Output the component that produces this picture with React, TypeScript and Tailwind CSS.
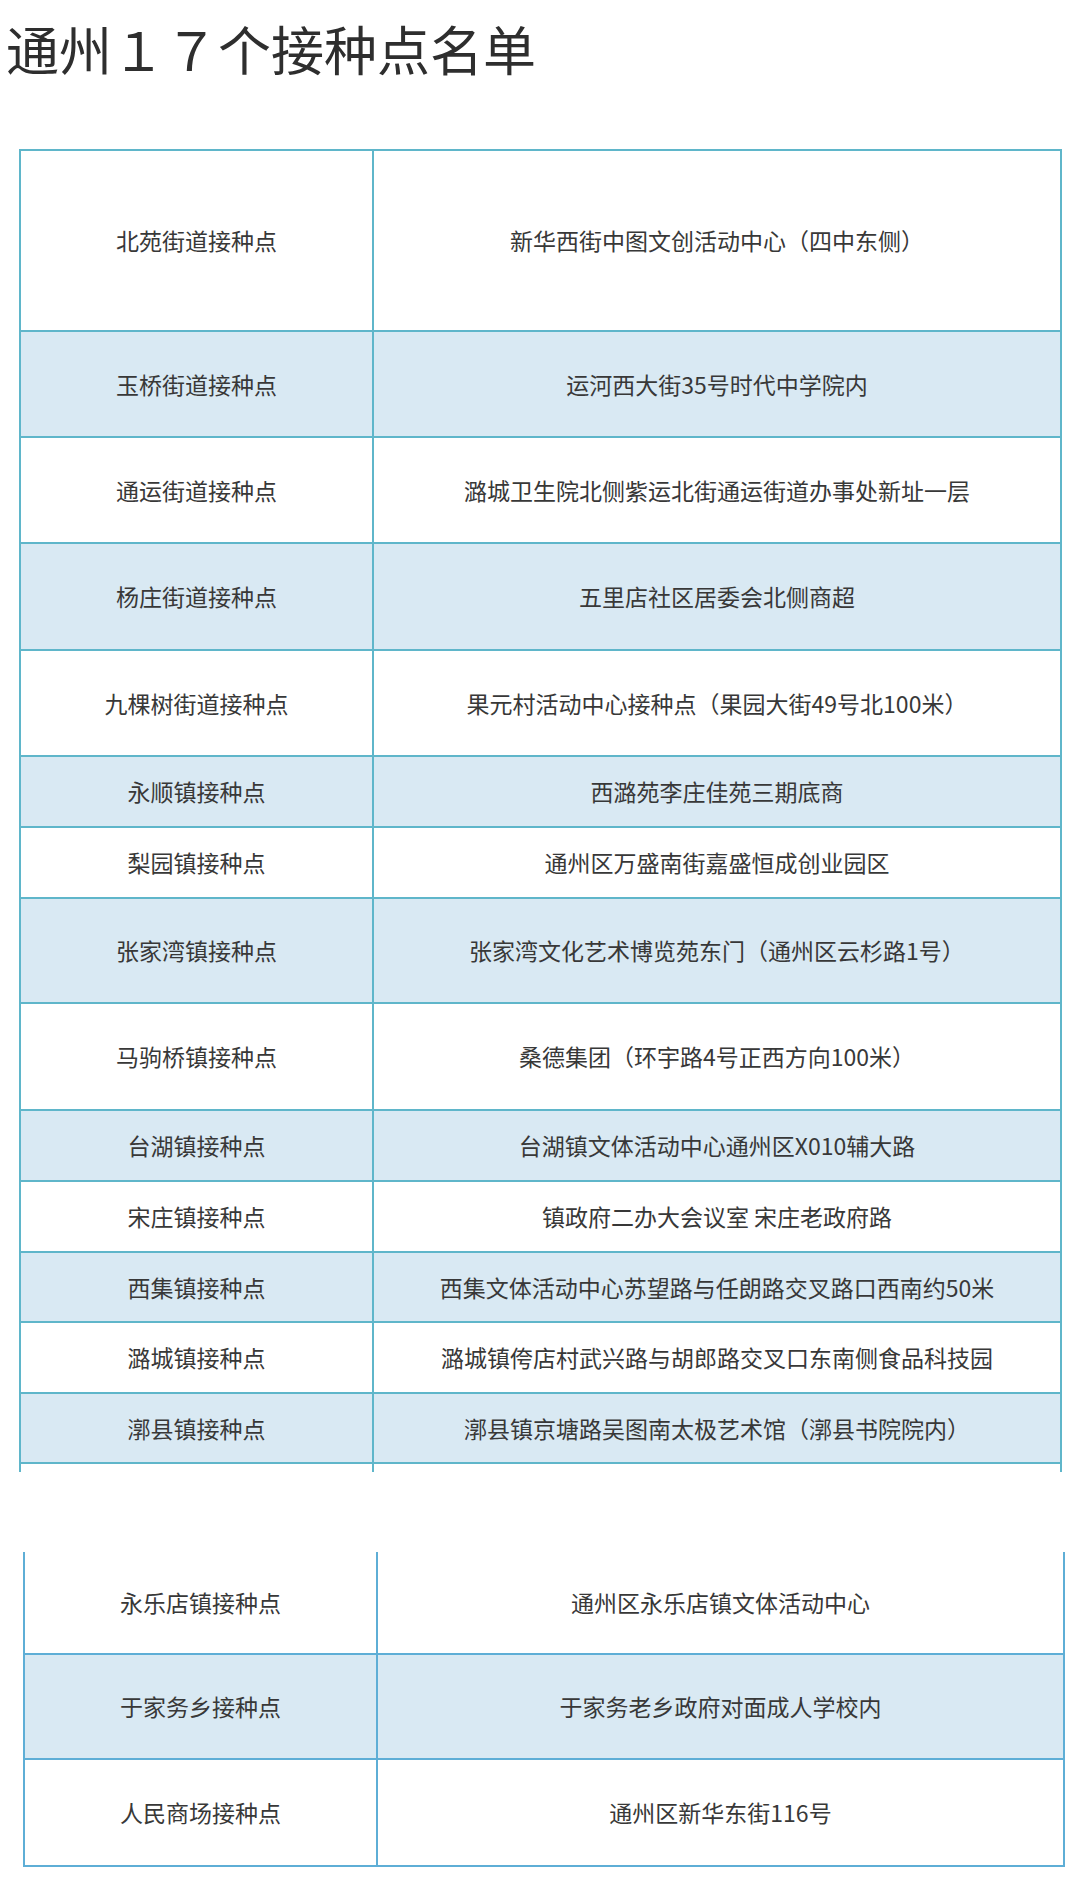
const FONT = { fontFamily: '"Noto Sans CJK SC", "Noto Sans", sans-serif' };

type Row = { name: string; addr: string; h: string; blue?: boolean };

const firstRows: Row[] = [
  { name: "北苑街道接种点", addr: "新华西街中图文创活动中心（四中东侧）", h: "h-[179px]" },
  { name: "玉桥街道接种点", addr: "运河西大街35号时代中学院内", h: "h-[106px]", blue: true },
  { name: "通运街道接种点", addr: "潞城卫生院北侧紫运北街通运街道办事处新址一层", h: "h-[106px]" },
  { name: "杨庄街道接种点", addr: "五里店社区居委会北侧商超", h: "h-[107px]", blue: true },
  { name: "九棵树街道接种点", addr: "果元村活动中心接种点（果园大街49号北100米）", h: "h-[106px]" },
  { name: "永顺镇接种点", addr: "西潞苑李庄佳苑三期底商", h: "h-[71px]", blue: true },
  { name: "梨园镇接种点", addr: "通州区万盛南街嘉盛恒成创业园区", h: "h-[71px]" },
  { name: "张家湾镇接种点", addr: "张家湾文化艺术博览苑东门（通州区云杉路1号）", h: "h-[105px]", blue: true },
  { name: "马驹桥镇接种点", addr: "桑德集团（环宇路4号正西方向100米）", h: "h-[107px]" },
  { name: "台湖镇接种点", addr: "台湖镇文体活动中心通州区X010辅大路", h: "h-[71px]", blue: true },
  { name: "宋庄镇接种点", addr: "镇政府二办大会议室 宋庄老政府路", h: "h-[71px]" },
  { name: "西集镇接种点", addr: "西集文体活动中心苏望路与任朗路交叉路口西南约50米", h: "h-[70px]", blue: true },
  { name: "潞城镇接种点", addr: "潞城镇侉店村武兴路与胡郎路交叉口东南侧食品科技园", h: "h-[71px]" },
  { name: "漷县镇接种点", addr: "漷县镇京塘路吴图南太极艺术馆（漷县书院院内）", h: "h-[70px]", blue: true },
];

const secondRows: Row[] = [
  { name: "永乐店镇接种点", addr: "通州区永乐店镇文体活动中心", h: "h-[101px]" },
  { name: "于家务乡接种点", addr: "于家务老乡政府对面成人学校内", h: "h-[105px]", blue: true },
  { name: "人民商场接种点", addr: "通州区新华东街116号", h: "h-[107px]" },
];

function TableRow({ row, first, border }: { row: Row; first?: boolean; border: string }) {
  return (
    <div
      className={`flex ${row.h} ${row.blue ? "bg-[#d9e9f3]" : "bg-white"} ${first ? "" : "border-t-2"} ${border}`}
    >
      <div className={`flex w-[353px] shrink-0 items-center justify-center border-r-2 ${border}`}>
        <span className="text-[23px] leading-none text-[#383838]">{row.name}</span>
      </div>
      <div className="flex flex-1 items-center justify-center">
        <span className="text-[23px] leading-none text-[#383838]">{row.addr}</span>
      </div>
    </div>
  );
}

export default function App() {
  return (
    <div className="h-[1886px] w-[1080px] overflow-hidden bg-white" style={FONT}>
      <div className="h-[149px] pl-[6px] pt-[21px]">
        <h1 className="text-[53px] font-normal leading-[54px] text-[#2e2e2e]">通州１７个接种点名单</h1>
      </div>

      {/* first table, cut at the bottom */}
      <div className="ml-[19px] w-[1043px] border-x-2 border-t-2 border-[#5fb6ca]">
        {firstRows.map((row, i) => (
          <TableRow key={row.name} row={row} first={i === 0} border="border-[#5fb6ca]" />
        ))}
        <div className="flex h-[10px] border-t-2 border-[#5fb6ca]">
          <div className="w-[353px] shrink-0 border-r-2 border-[#5fb6ca]" />
          <div className="flex-1" />
        </div>
      </div>

      {/* second table, cut at the top */}
      <div className="ml-[23px] mt-[80px] w-[1042px] border-x-2 border-b-2 border-[#5eaed6]">
        {secondRows.map((row, i) => (
          <TableRow key={row.name} row={row} first={i === 0} border="border-[#5eaed6]" />
        ))}
      </div>
    </div>
  );
}
